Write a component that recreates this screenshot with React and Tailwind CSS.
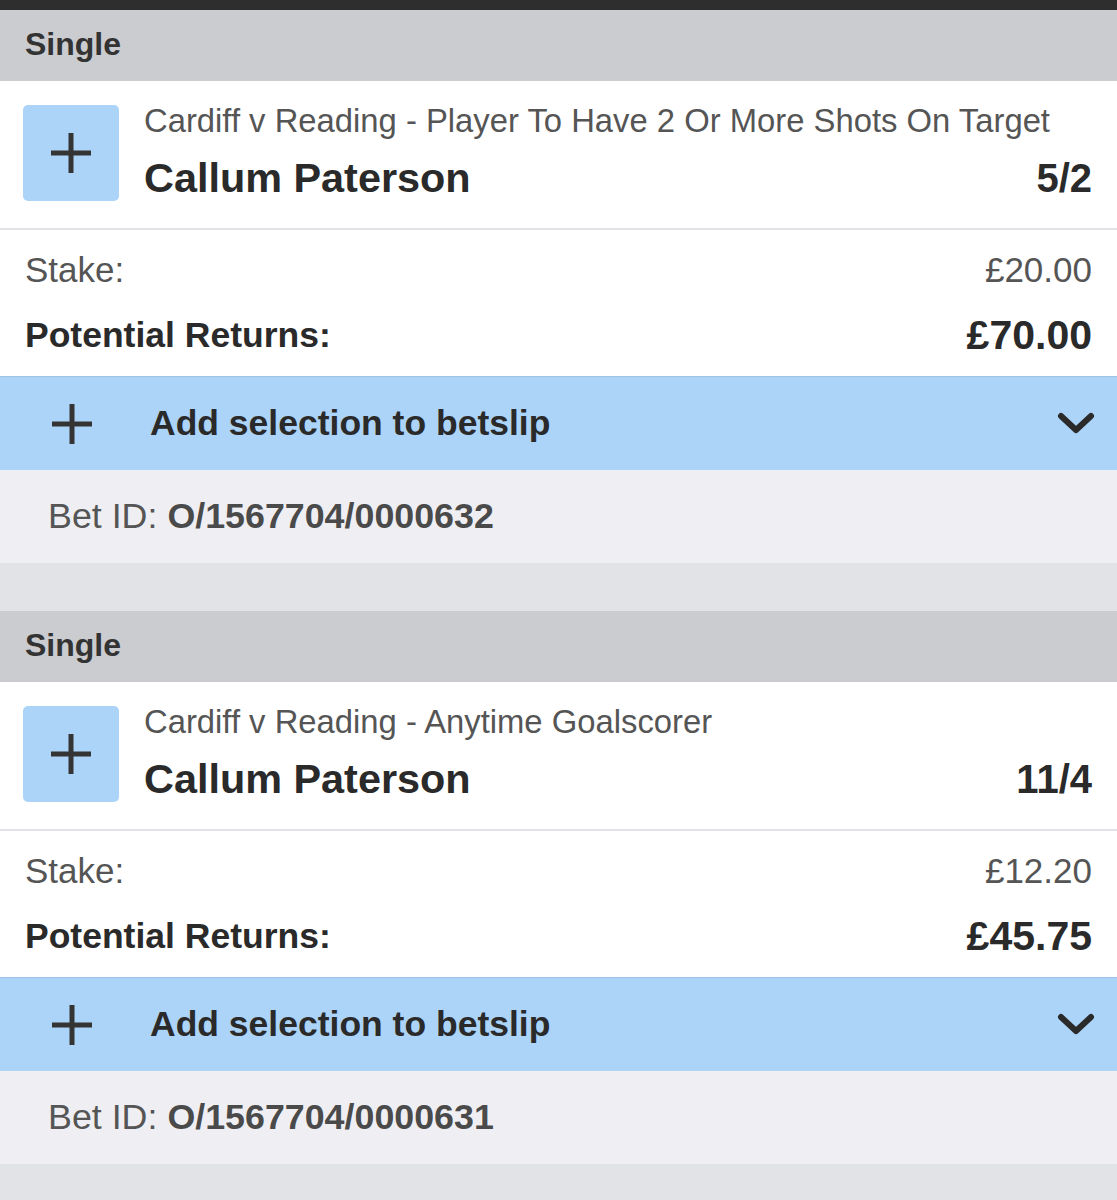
import React from "react";

const font = { fontFamily: '"Liberation Sans", Arial, sans-serif' };

function Plus() {
  return (
    <svg width="42" height="42" viewBox="0 0 42 42" fill="none">
      <path d="M21 1V41M1 21H41" stroke="#343434" strokeWidth="5" />
    </svg>
  );
}

function Chevron() {
  return (
    <svg width="38" height="26" viewBox="0 0 38 26" fill="none">
      <path d="M4 5L19 19L34 5" stroke="#2a2a2a" strokeWidth="6" strokeLinecap="round" strokeLinejoin="round" />
    </svg>
  );
}

function Bet({ market, name, odds, stake, returns, id }) {
  return (
    <div>
      <div className="h-[71px] bg-[#cbccd0] flex items-center pl-[25px] pb-[3px]">
        <span className="text-[32px] font-bold text-[#333333]">Single</span>
      </div>
      <div className="h-[147px] bg-white flex items-start pl-[23px] pr-[25px]">
        <div className="mt-[24px] w-[96px] h-[96px] rounded-[5px] bg-[#acd4f8] flex items-center justify-center shrink-0">
          <Plus />
        </div>
        <div className="flex-1 ml-[25px] mt-[20px] flex flex-col">
          <div className="text-[32.8px] leading-[40px] text-[#555555] whitespace-nowrap">{market}</div>
          <div className="mt-[13px] flex items-center justify-between">
            <span className="text-[41.4px] leading-[48px] font-bold text-[#2a2a2a]">{name}</span>
            <span className="text-[40px] leading-[48px] font-bold text-[#2a2a2a]">{odds}</span>
          </div>
        </div>
      </div>
      <div className="h-[2px] bg-[#e2e2e7]" />
      <div className="h-[146px] bg-white px-[25px] pt-[20px] flex flex-col">
        <div className="flex items-center justify-between h-[40px]">
          <span className="text-[35px] text-[#555555]">Stake:</span>
          <span className="text-[35px] text-[#555555]">{stake}</span>
        </div>
        <div className="flex items-center justify-between h-[48px] mt-[22px]">
          <span className="text-[35.5px] font-bold text-[#2a2a2a]">Potential Returns:</span>
          <span className="text-[41px] font-bold text-[#2a2a2a]">{returns}</span>
        </div>
      </div>
      <div className="h-[94px] bg-[#acd4f8] border-t border-[#9fc2e2] flex items-center pl-[51px] pr-[22px]">
        <Plus />
        <span className="ml-[57px] flex-1 text-[35.5px] font-bold text-[#2a2a2a]">Add selection to betslip</span>
        <Chevron />
      </div>
      <div className="h-[93px] bg-[#efeff3] flex items-center pl-[48px]">
        <span className="text-[35.8px] text-[#555555]">
          Bet ID: <span className="font-bold text-[#4a4a4a]">{id}</span>
        </span>
      </div>
    </div>
  );
}

export default function App() {
  return (
    <div style={font} className="w-[1117px] h-[1200px] bg-[#e1e3e7] overflow-hidden">
      <div className="h-[10px] bg-[#2e2e2e]" />
      <Bet
        market="Cardiff v Reading - Player To Have 2 Or More Shots On Target"
        name="Callum Paterson"
        odds="5/2"
        stake="£20.00"
        returns="£70.00"
        id="O/1567704/0000632"
      />
      <div className="h-[48px]" />
      <Bet
        market="Cardiff v Reading - Anytime Goalscorer"
        name="Callum Paterson"
        odds="11/4"
        stake="£12.20"
        returns="£45.75"
        id="O/1567704/0000631"
      />
    </div>
  );
}
